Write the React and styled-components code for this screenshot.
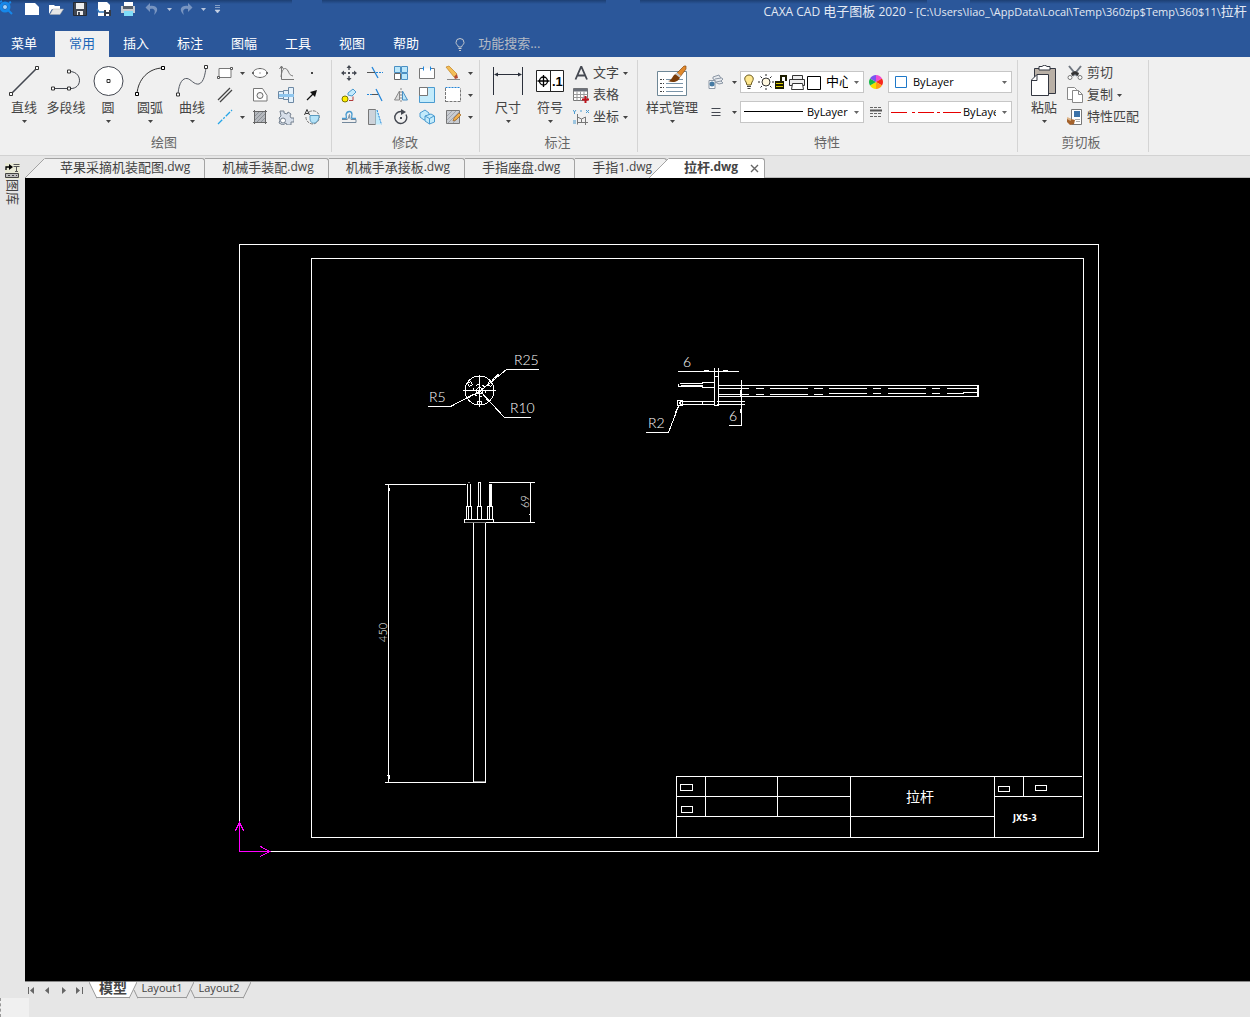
import React from "react";
import styled, { createGlobalStyle } from "styled-components";

const big = {
  line: (
    <>
      <path d="M3 29L29 3" stroke="#444851" strokeWidth="1.600" />
      <path d="M1.500 27.500h3v3h-3zM27.500 1.500h3v3h-3z" fill="#fff" stroke="#333" />
    </>
  ),
  polyline: (
    <>
      <path d="M3 23.500H19C33 25 33 6 19 6.500" fill="none" stroke="#444851" />
      <path
        d="M1.500 22h3v3h-3zM17.500 22h3v3h-3zM17.500 5h3v3h-3z"
        fill="#fff"
        stroke="#333"
      />
    </>
  ),
  circle: (
    <>
      <circle cx="16.500" cy="16" r="14.500" fill="#fff" stroke="#444851" />
      <path d="M15 14.500h3v3h-3z" fill="#fff" stroke="#333" />
    </>
  ),
  arc: (
    <>
      <path d="M3 29C4 14 15 3 29 3" fill="none" stroke="#333" />
      <path
        d="M1.500 27.500h3v3h-3zM27.500 1.500h3v3h-3z"
        fill="#fff"
        stroke="#000"
      />
    </>
  ),
  curve: (
    <>
      <path
        d="M2 29C3 17 7 13 11 13.500S18 20 23 19C28 17 29 9 30 3"
        fill="none"
        stroke="#555a63"
      />
      <path
        d="M.5 28h3v3h-3zM28.500 .5h3v3h-3z"
        fill="#fff"
        stroke="#333"
      />
    </>
  ),
  size: (
    <>
      <path d="M1.500 2v28M30.500 2v28M3 9.500h26" stroke="#2b303b" />
      <path d="M2 9.500l4-2v4zM30 9.500l-4-2v4z" fill="#2b303b" />
    </>
  ),
  symbol: (
    <>
      <path d="M2.500 5.500h27v21h-27zM16.500 5.500v21" fill="#fff" stroke="#222" />
      <circle cx="9.500" cy="16" r="4" fill="none" stroke="#000" strokeWidth="1.300" />
      <path d="M3.500 16h12M9.500 10v12" stroke="#000" strokeWidth="1.300" />
      <text
        x="18"
        y="21"
        fontFamily="Liberation Sans, sans-serif"
        fontWeight="700"
        fontSize="13"
      >
        .1
      </text>
    </>
  ),
  style: (
    <>
      <path d="M1.500 6.500h29v24h-29z" fill="#fff" stroke="#6e8796" />
      <path
        d="M4 14.500h4M4 18.500h4M4 22.500h4M4 26.500h4"
        stroke="#444"
        strokeDasharray="2 1"
      />
      <path
        d="M10 14.500h17M10 18.500h17M10 22.500h17M10 26.500h17"
        stroke="#7a94a8"
      />
      <path d="M20 9l8-8h2v3l-6 8z" fill="#e0882b" stroke="#8a4c12" strokeWidth=".7" />
      <path d="M12 16c4 0 4-6 8-7l4 3c-1 5-7 6-12 4z" fill="#7a3c08" />
      <path d="M19 9l2-1.500 4 3.500-1.500 1.500z" fill="#c6c6c6" />
    </>
  ),
  paste: (
    <>
      <path d="M6.500 3.500h21v25h-21z" fill="#b9b0a6" stroke="#333741" />
      <path d="M11 1.500h3c1-1.500 4-1.500 5 0h3v3.500H11z" fill="#fff" stroke="#333741" />
      <path d="M9 9.500h11.500v21h-17V15z" fill="#fff" stroke="#333741" />
      <path d="M3.500 15.500H9v-6" fill="none" stroke="#333741" />
    </>
  ),
};

const small = {
  rect: (
    <>
      <path d="M2 3.500h12v9H2z" fill="#fff" stroke="#777" />
      <path d="M.5 11.500h2v2h-2zM13.500 2.500h2v2h-2z" fill="#fff" stroke="#555" />
    </>
  ),
  ellipse: (
    <>
      <ellipse cx="8" cy="8" rx="7" ry="4.500" fill="#fff" stroke="#777" />
      <path d="M7.500 7.500h1v1h-1z" fill="#444" />
      <path d="M0 7h2v2H0zM14 7h2v2h-2zM7 3h2v1H7zM7 12h2v1H7z" fill="#666" />
    </>
  ),
  function: (
    <>
      <path d="M3.500 1v13.500H16M1.500 4l2-3 2 3" fill="none" stroke="#777" />
      <path d="M3 12C4 2 8 2 10 6s2 4 5 5" fill="none" stroke="#777" />
    </>
  ),
  point: <path d="M7 7h2v2H7z" fill="#444" />,
  parallel: <path d="M1 13L13 1M3 15L15 3" stroke="#444" strokeWidth="1.300" />,
  contour: (
    <>
      <path d="M1.500 1.500h9l4.500 7v5.500H1.500z" fill="#fff" stroke="#777" />
      <circle cx="8" cy="8.500" r="3" fill="#f5f5f5" stroke="#666" />
    </>
  ),
  shaft: (
    <>
      <path
        d="M.5 4.500h5v7h-5zM5.500 3.500h5v9h-5zM10.500 .5h5v15h-5z"
        fill="#e4f1fb"
        stroke="#6d88a3"
      />
      <path d="M1 7h15v3H1z" fill="#8fc6ee" />
    </>
  ),
  arrow: (
    <>
      <path d="M3 13l6-6" stroke="#111" strokeWidth="1.300" />
      <path d="M13 3l-2 7-5-5z" fill="#111" />
    </>
  ),
  center: (
    <path d="M1 15L15 1" stroke="#25a5e8" strokeWidth="1.300" strokeDasharray="6 1.500 2 1.500" />
  ),
  hatch: (
    <>
      <path d="M3 3h10v10H3z" fill="#b5b8bd" />
      <path d="M3 7l4-4M3 11l8-8M5 13l8-8M9 13l4-4" stroke="#80858c" strokeWidth=".8" />
      <path d="M1 2.500h14M1 13.500h14M2.500 1v14M13.500 1v14" stroke="#666" />
    </>
  ),
  gear: (
    <>
      <path
        d="M2 2h4v2l3 1 1-2 3 2-1 2 1 2h3v4h-3v3h-4l-1-2-3 2-4-2 1-3-1-2 2-2z"
        fill="#d7dfea"
        stroke="#74808f"
      />
      <circle cx="5" cy="11.500" r="2.500" fill="#fff" stroke="#74808f" />
    </>
  ),
  block: (
    <>
      <path d="M5 3C12-1 18 6 14 12S1 14 2 7" fill="none" stroke="#777" strokeDasharray="3 1" />
      <path d="M6 6.500h9c0 9-9 10-9 3z" fill="#b5e3f8" stroke="#5a9bc0" />
      <path d="M.5 6L3 .5 5.500 6M1.500 4.500h3" fill="none" stroke="#333" />
    </>
  ),
  move: (
    <>
      <path d="M8 1v4M8 11v4M1 8h4M11 8h4" stroke="#444851" strokeWidth="1.300" />
      <path
        d="M8 0l2.500 3h-5zM8 16l2.500-3h-5zM0 8l3-2.500v5zM16 8l-3-2.500v5z"
        fill="#444851"
      />
      <path d="M7 7h2v2H7z" fill="#444851" />
    </>
  ),
  trim: (
    <>
      <path d="M5 2l6 11" stroke="#2386da" strokeWidth="1.300" />
      <path d="M0 7.500h8" stroke="#555" />
      <path d="M9 7.500h7" stroke="#2386da" strokeDasharray="2 1" />
    </>
  ),
  array: (
    <>
      <path
        d="M1.500 1.500h6v6h-6zM8.500 1.500h6v6h-6zM8.500 8.500h6v6h-6z"
        fill="#bce7fa"
        stroke="#4a90c4"
      />
      <path d="M1.500 8.500h6v6h-6z" fill="#fff" stroke="#666" />
    </>
  ),
  breakline: (
    <>
      <path d="M5 3.500H.5v10h15v-10H11" fill="#fff" stroke="#777" />
      <path d="M3 3.500h2M4.500 1.500v4M11 3.500h2M11.500 1.500v4" stroke="#2386da" />
    </>
  ),
  erase: (
    <>
      <path d="M1 2l3-1 8 8-3 3z" fill="#f3bd57" stroke="#c28321" strokeWidth=".7" />
      <path d="M9 12l3-3 1 4-3 1z" fill="#b54b31" />
      <path d="M2 14.500h13" stroke="#888" />
    </>
  ),
  copymove: (
    <>
      <circle cx="4" cy="12" r="3" fill="#ffee00" stroke="#7b7600" />
      <path d="M7 6l5-4 3 3-4 4-4-1z" fill="#c4eafc" stroke="#4b9acf" />
      <path d="M12 9.500v4H8" fill="none" stroke="#b13a3a" />
    </>
  ),
  extend: (
    <>
      <path d="M9 2l6 12" stroke="#2386da" strokeWidth="1.300" />
      <path d="M0 7.500h5" stroke="#2386da" strokeDasharray="2 1" />
      <path d="M5 7.500h6" stroke="#555" />
    </>
  ),
  mirror: (
    <>
      <path d="M6.500 4v9h-5z" fill="#ddd" stroke="#888" />
      <path d="M9.500 4v9h5z" fill="#bce7fa" stroke="#4a90c4" />
      <path d="M8 1v14" stroke="#888" strokeDasharray="2 1" />
    </>
  ),
  scale: (
    <>
      <path d="M.5 .5h15v15H.5z" fill="#c3ebfb" stroke="#4a9bd0" />
      <path d="M.5 .5h8v8h-8z" fill="#fff" stroke="#777" />
    </>
  ),
  stretch: (
    <>
      <path d="M.5 1h15v14H.5z" fill="#fff" />
      <path d="M.5 1v14M.5 14.500h15V1" fill="none" stroke="#777" strokeDasharray="3 1" />
      <path d="M.5 .5h15" stroke="#2386da" strokeDasharray="2 1" />
    </>
  ),
  offset: (
    <>
      <path
        d="M1 9.500h4c1-1 0-3 0-4 1-4 6-4 6 0 0 1-1 3 0 4h4"
        fill="none"
        stroke="#4a9bd0"
        strokeWidth="1.300"
      />
      <path d="M1 13.500h14v-3H10c-2-1-1-4-1.500-5-1 1 0 4-2.500 5H1" fill="none" stroke="#73889c" />
    </>
  ),
  chamfer: (
    <>
      <path d="M1.500 .5h7v15h-7z" fill="#cdd3da" stroke="#777" />
      <path d="M8.500 1h2l4 14.500h-6z" fill="#c3ebfb" />
      <path d="M10 1l4.500 14.500" stroke="#2386da" strokeDasharray="2 1" />
    </>
  ),
  rotate: (
    <>
      <path d="M8 2.500a6 6 0 1 0 5 3" fill="none" stroke="#444851" strokeWidth="1.400" />
      <path d="M8 0l5 3-5 3z" fill="#444851" />
      <path d="M7 8h2v2H7z" fill="#444851" />
    </>
  ),
  copy3d: (
    <>
      <path d="M1 4l5-3 4 3v5l-5 2-4-3z" fill="#c3ebfb" stroke="#4a9bd0" />
      <path d="M6 7l6-2 3.500 2v6l-5 2-4.500-3z" fill="#c3ebfb" stroke="#4a9bd0" />
      <path d="M6 7l4.500 2.500L15 7M10.500 9.500V15" fill="none" stroke="#4a9bd0" />
    </>
  ),
  hatchedit: (
    <>
      <path d="M1.500 1.500h13v13h-13z" fill="#c9ccd1" stroke="#777" />
      <path d="M2 7l5-5M2 11l9-9M3 14l11-11M8 14l6-6" stroke="#979ca3" strokeWidth=".8" />
      <path d="M8 12l1-3 5-5 2 2-5 5z" fill="#efae4b" stroke="#8f5416" strokeWidth=".6" />
    </>
  ),
  text: (
    <path
      d="M2.500 14.500L8 2h.5L14 14.500M4.500 10.500h7.500"
      fill="none"
      stroke="#444851"
      strokeWidth="1.800"
    />
  ),
  table: (
    <>
      <path d="M.5 1.500h14v12H.5z" fill="#fff" stroke="#777" />
      <path d="M.5 1.500h14v3H.5z" fill="#6c7079" />
      <path d="M.5 7.500h14M.5 10.500h14M4 4.500v9M7.500 4.500v9M11 4.500v9" stroke="#999" />
      <path d="M9 12.500h7M12.500 9v7" stroke="#c0131c" strokeWidth="2" />
    </>
  ),
  coord: (
    <>
      <path
        d="M4.500 5v10.500M4.500 13.500H15M4.500 8l4 2 4-2M8.500 10v3M12.500 8v8"
        fill="none"
        stroke="#777"
      />
      <path
        d="M0 1l1.500 2L3 1M1.500 3v2M7 2h2M13 1l3 3M16 1l-3 3M0 12h3M0 14h3"
        fill="none"
        stroke="#4a9bd0"
      />
    </>
  ),
  layers: (
    <>
      <path
        d="M5 3l6-2 1 2 3 2-2 2 2 2-4 1-4-2V6l-2-1z"
        fill="#e7eaee"
        stroke="#8c97a5"
      />
      <path d="M7 5l6-1M8 8l5-1" stroke="#8c97a5" />
      <path d="M1 6.500h6v8H1z" fill="#fff" stroke="#8c97a5" />
      <circle cx="4" cy="10" r="2.500" fill="#467aa3" />
    </>
  ),
  lines: <path d="M3.500 4.500h9M3.500 8.500h9M3.500 11.500h9" stroke="#444851" />,
  dashes: (
    <>
      <path d="M2 3.500h12M2 9.500h12M2 12.500h12" stroke="#666" strokeDasharray="3 1" />
      <path d="M2 6.500h12" stroke="#555" strokeWidth="2" />
    </>
  ),
  wheel: (
    <>
      <path d="M8 8V1a7 7 0 0 1 6 3.500z" fill="#f24bd0" />
      <path d="M8 8l6-3.500a7 7 0 0 1 0 7z" fill="#f7271c" />
      <path d="M8 8l6 3.500A7 7 0 0 1 8 15z" fill="#ff9d13" />
      <path d="M8 8v7a7 7 0 0 1-6-3.500z" fill="#f5df00" />
      <path d="M8 8l-6 3.500a7 7 0 0 1 0-7z" fill="#15b849" />
      <path d="M8 8L2 4.500A7 7 0 0 1 8 1z" fill="#7a55f0" />
    </>
  ),
  cut: (
    <>
      <path d="M2 1l8 10M14 1L6 11" stroke="#707780" strokeWidth="2" />
      <path d="M4 8l4-2 4 2-1 3-3-2-3 2z" fill="#333" />
      <circle cx="3" cy="12.500" r="2" fill="#fff" stroke="#777" />
      <circle cx="13" cy="12.500" r="2" fill="#fff" stroke="#777" />
    </>
  ),
  copy: (
    <>
      <path d="M.5 .5h7l2 2v10h-9z" fill="#fff" stroke="#888" />
      <path d="M5.500 3.500h6l4 4v8h-10z" fill="#fff" stroke="#888" />
      <path d="M11.500 3.500v4h4" fill="none" stroke="#888" />
    </>
  ),
  match: (
    <>
      <path d="M4.500 .5h10v15h-10z" fill="#fff" stroke="#777" />
      <path d="M7 2h6v6H7z" fill="#3b72a9" />
      <path d="M8 10.500h5M9 12.500h4" stroke="#aaa" />
      <path d="M0 9l4 1 4 1-1 4-4 1-3-3z" fill="#a4622c" />
      <path d="M0 9l4 2" stroke="#ddb58a" strokeWidth="2" />
    </>
  ),
};

const quick = {
  file: <path d="M1 2h10l4 4v8H1z" fill="#fff" />,
  open: (
    <>
      <path d="M1 13V4h5l1 1h5v3H4z" fill="#fff" />
      <path d="M2 13.500L5 8h10.500L12 13.500z" fill="#e6e6e6" stroke="#aaa" strokeWidth=".5" />
    </>
  ),
  save: (
    <>
      <path d="M1.500 1.500h13v13h-13z" fill="#414753" stroke="#252a33" />
      <path d="M4 2h8v6H4z" fill="#eee" />
      <path d="M5 10h6v4H5z" fill="#eee" />
      <path d="M6 11h2v3H6z" fill="#414753" />
    </>
  ),
  saveas: (
    <>
      <path d="M2 1h9l3 3v11H2z" fill="#fff" />
      <path d="M1 8l2 3h5" fill="none" stroke="#3278bd" strokeWidth="1.500" />
      <path d="M8 9h7v6H8z" fill="#343b48" />
      <path d="M10 9h3v2h-3zM10 13h3v2h-3z" fill="#fff" />
    </>
  ),
  print: (
    <>
      <path d="M4 1h9v5H4z" fill="#fff" />
      <path d="M1 5h14v7H1z" fill="#c9cdd2" />
      <path d="M3 5h10v3H3z" fill="#555e69" />
      <path d="M4 10h9v5H4z" fill="#7fdcf8" />
    </>
  ),
  undo: (
    <path d="M6 2L1.500 6.500 6 11V8c4-1 6 1 4 6 6-5 3-10-4-9z" fill="#7894c0" />
  ),
  redo: (
    <path d="M10 2l4.500 4.500L10 11V8C6 7 4 9 6 14 0 9 3 4 10 5z" fill="#7894c0" />
  ),
};

const Icon = ({ d, size = 16 }) => (
  <svg width={size} height={size} viewBox={`0 0 ${size} ${size}`} aria-hidden="true">
    {d}
  </svg>
);

const Caret = () => (
  <svg width="5" height="3" viewBox="0 0 5 3" aria-hidden="true">
    <path d="M0 0h5L2.500 3z" fill="currentColor" />
  </svg>
);

const drawTools = [
  ["rect", "矩形", true],
  ["ellipse", "椭圆"],
  ["function", "公式曲线"],
  ["point", "点"],
  ["parallel", "平行线"],
  ["contour", "局部放大图"],
  ["shaft", "孔/轴"],
  ["arrow", "箭头"],
  ["center", "中心线", true],
  ["hatch", "剖面线"],
  ["gear", "齿轮"],
  ["block", "块"],
];

const editTools = [
  ["move", "平移"],
  ["trim", "裁剪"],
  ["array", "阵列"],
  ["breakline", "打断"],
  ["erase", "删除", true],
  ["copymove", "平移复制"],
  ["extend", "延伸"],
  ["mirror", "镜像"],
  ["scale", "缩放"],
  ["stretch", "拉伸", true],
  ["offset", "等距线"],
  ["chamfer", "过渡"],
  ["rotate", "旋转"],
  ["copy3d", "分解"],
  ["hatchedit", "编辑填充", true],
];

const BigTool = ({ icon, label, wide, plain }) => (
  <BigButton $wide={wide}>
    <Icon d={big[icon]} size={32} />
    <span>{label}</span>
    {!plain && <Caret />}
  </BigButton>
);

// every row keeps a narrow column for the caret, even where it is empty
const SmallTools = ({ items, cols, caretAfter }) => (
  <ToolGrid $cols={cols}>
    {items.map(([icon, label, caret], i) => (
      <React.Fragment key={icon}>
        <SmallButton aria-label={label}>
          <Icon d={small[icon]} />
        </SmallButton>
        {i % caretAfter.every === caretAfter.at &&
          (caret ? (
            <SmallButton aria-label={label + "选项"}>
              <Caret />
            </SmallButton>
          ) : (
            <i />
          ))}
      </React.Fragment>
    ))}
  </ToolGrid>
);

const ListTool = ({ icon, label, caret }) => (
  <ListButton>
    <Icon d={small[icon]} />
    <span>{label}</span>
    {caret && <Caret />}
  </ListButton>
);

const DocTab = ({ name, active, first }) => (
  <Doc $active={active}>
    {(active || first) && (
      <svg width="20" height="20" aria-hidden="true">
        <path d="M0 20L19 1h1v19z" fill={active ? "#fff" : "#f0f0f0"} />
        <path d="M0 20L19.500 .5" stroke="#a3a3a3" />
      </svg>
    )}
    <DocName $active={active} $slant={active || first}>
      {name}
      <Latin>.dwg</Latin>
      {active && (
        <svg width="9" height="9" aria-hidden="true">
          <path d="M1 1l7 7M8 1L1 8" stroke="#666" strokeWidth="1.400" />
        </svg>
      )}
    </DocName>
  </Doc>
);

const Sheet = ({ name, active }) => (
  <SheetTab $active={active}>
    <svg width="8" height="17" aria-hidden="true">
      {active && <path d="M0 0l8 17V0z" fill="#fff" />}
      <path d={active ? "M0 0l8 16.500" : "M4 8l4 8.500"} stroke="#999" />
    </svg>
    <SheetName $active={active}>{name}</SheetName>
    <svg width="8" height="17" aria-hidden="true">
      {active && <path d="M0 0h8L0 17z" fill="#fff" />}
      <path d="M8 0L0 16.500" stroke="#999" />
    </svg>
  </SheetTab>
);

const Drawing = () => (
  <Sketch role="img" aria-label="拉杆">
    <g
      transform="translate(-24.500 -177.500)"
      fill="none"
      stroke="#fff"
      strokeLinecap="square"
      shapeRendering="crispEdges"
    >
      {/* sheet frame */}
      <path d="M239 244H1098V851H239zM311 258H1083V837H311z" />

      {/* title block */}
      <path d="M676 837V776H1081M705 776V816M777 776V816M850 776V837M994 776V837M1023 776V796" />
      <path d="M676 796H850M994 796H1081M676 816H994" />
      <path d="M680 784h12v6h-12zM681 806h11v6h-11zM998 786h11v5h-11zM1035 785h11v5h-11z" />

      {/* end view */}
      <circle cx="479" cy="390" r="14.500" />
      <circle cx="479" cy="390" r="6" strokeDasharray="3 3" strokeLinecap="butt" />
      <circle cx="479" cy="390" r="3" />
      <path d="M463 390H495M479 375V406" />
      <path d="M467 383l3-2 2 3-3 2zM487 384l2-3 3 3-2 2zM477 401h4v3h-4z" />
      <path d="M479 391L506 369H538M428 406H450L479 391M479 390L504 417H530" />
      <path d="M492 379l5-5 1 0zM473 394l-7 3 1 1zM485 396l2 4 2 1z" fill="#fff" />

      {/* side view */}
      <path d="M678 371H738M704 370H708M723 370H727M714 368V376M718 368V376M714 376H718V405H714z" />
      <path d="M680 383H702M678 384V386M678 386H702M681 385H702M702 382H714M702 387H714" />
      <path d="M680 401H714M717 401H744M680 404H714M717 404H744M702 401V404" />
      <path d="M677 400h5v5h-5zM679 402h1v1h-1z" />
      <path d="M718 385H978V396H718M977 385V396" />
      <path d="M719 388H748M756 388H763M770 388H807M814 388H822M829 388H866M873 388H880M888 388H925M932 388H939M947 388H977" />
      <path d="M719 394H748M756 394H763M770 394H807M814 394H822M829 393H866M873 393H880M888 393H925M932 393H939M947 393H963M963 392H977" />
      <path d="M741 380V425H729M740 390V395M740 409V412" />
      <path d="M646 432H668L678 406M675 412l2-5-1 5z" />

      {/* front view */}
      <path d="M385 484H465M388 484V782M385 782H485M389 488V490M387 775H389V778" />
      <path d="M473 522V781M485 522V781M464 522V519H493V522H485" />
      <path d="M474 781H484M465 522H485M468 482h1" stroke="#888" />
      <path d="M467 484V506M470 484V506M466 519V506H471V519M468 506V519" />
      <path d="M478 506V482H480V506M477 519V506H481V519" />
      <path d="M489 506V484H491V506M490 484V506M487 519V506H492V519M489 506V519" />
      <path d="M489 482H534M493 522H534M530 482V522M529 514v0" />

      {/* coordinate origin */}
      <path d="M239 822V851H269M235 830L239 822L243 830M260 846L269 851L260 856" stroke="#f0f" />
    </g>
    <g transform="translate(-25 -178)">
      <DimText x="514" y="365">R25</DimText>
      <DimText x="429" y="402">R5</DimText>
      <DimText x="510" y="413">R10</DimText>
      <DimText x="683" y="367">6</DimText>
      <DimText x="729" y="421">6</DimText>
      <DimText x="648" y="428">R2</DimText>
      <DimText $small transform="translate(529 508) rotate(-90)">69</DimText>
      <DimText $small transform="translate(387 642) rotate(-90)">450</DimText>
      <PartName x="906" y="802">拉杆</PartName>
      <PartCode x="1013" y="821">JXS-3</PartCode>
    </g>
  </Sketch>
);

const App = () => {
  return (
    <Window>
      <GlobalStyle />
      <Header>
        <TitleRow>
          <svg width="14" height="16" aria-hidden="true">
            <circle cx="5" cy="7" r="4" fill="none" stroke="#1688ea" strokeWidth="3" />
            <circle cx="5" cy="7" r="2" fill="#9fd4ff" />
            <path d="M7 9l5 5M0 2l2-1M9 3l2-1" stroke="#1688ea" strokeWidth="2" />
          </svg>
          <QuickBar>
            <QuickButton aria-label="新建"><Icon d={quick.file} /></QuickButton>
            <QuickButton aria-label="打开"><Icon d={quick.open} /></QuickButton>
            <QuickButton aria-label="保存"><Icon d={quick.save} /></QuickButton>
            <QuickButton aria-label="另存为"><Icon d={quick.saveas} /></QuickButton>
            <QuickButton aria-label="打印"><Icon d={quick.print} /></QuickButton>
            <QuickButton aria-label="撤销"><Icon d={quick.undo} /></QuickButton>
            <QuickButton $width="10px" aria-label="撤销列表"><Caret /></QuickButton>
            <QuickButton aria-label="恢复"><Icon d={quick.redo} /></QuickButton>
            <QuickButton $width="10px" aria-label="恢复列表"><Caret /></QuickButton>
            <QuickButton $width="18px" aria-label="自定义">
              <svg width="7" height="8" aria-hidden="true">
                <path
                  d="M1 .5h5M1 2.500h5M1 5h5L3.500 8z"
                  fill="#c8d3e6"
                  stroke="#c8d3e6"
                  strokeWidth=".6"
                />
              </svg>
            </QuickButton>
          </QuickBar>
          <Title>
            <Latin>CAXA CAD </Latin>电子图板
            <Latin> 2020 - </Latin>
            <Latin $small>[C:\Users\liao_\AppData\Local\Temp\360zip$Temp\360$11\</Latin>
            拉杆
          </Title>
        </TitleRow>
        <Menu>
          <MenuButton $first>菜单</MenuButton>
          <MenuButton $active>常用</MenuButton>
          <MenuButton>插入</MenuButton>
          <MenuButton>标注</MenuButton>
          <MenuButton>图幅</MenuButton>
          <MenuButton>工具</MenuButton>
          <MenuButton>视图</MenuButton>
          <MenuButton>帮助</MenuButton>
          <Search>
            <svg width="10" height="13" aria-hidden="true">
              <path
                d="M3.500 9C3 7 1 6.500 1 4.500a4 4 0 0 1 8 0C9 6.500 7 7 6.500 9z"
                fill="none"
                stroke="#c5c9cf"
              />
              <path d="M3.500 10.500h3M4 12.500h2" stroke="#c5c9cf" />
            </svg>
            <input type="text" aria-label="功能搜索" placeholder="功能搜索..." />
          </Search>
        </Menu>
      </Header>

      <Ribbon>
        <Group $pad="0 6px 0 3px">
          <Tools>
            <BigTool icon="line" label="直线" />
            <BigTool icon="polyline" label="多段线" plain />
            <BigTool icon="circle" label="圆" />
            <BigTool icon="arc" label="圆弧" />
            <BigTool icon="curve" label="曲线" />
            <SmallTools
              items={drawTools}
              cols="24px 10px 26px 26px 26px"
              caretAfter={{ every: 4, at: 0 }}
            />
          </Tools>
          <GroupName>绘图</GroupName>
        </Group>
        <Group $pad="0 5px 0 4px">
          <Tools>
            <SmallTools
              items={editTools}
              cols="repeat(5, 26px) 8px"
              caretAfter={{ every: 5, at: 4 }}
            />
          </Tools>
          <GroupName>修改</GroupName>
        </Group>
        <Group $pad="0 9px 0 7px">
          <Tools>
            <BigTool icon="size" label="尺寸" />
            <BigTool icon="symbol" label="符号" />
            <ToolList>
              <ListTool icon="text" label="文字" caret />
              <ListTool icon="table" label="表格" />
              <ListTool icon="coord" label="坐标" caret />
            </ToolList>
          </Tools>
          <GroupName>标注</GroupName>
        </Group>
        <Group $pad="0 5px 0 4px">
          <Tools>
            <BigTool icon="style" label="样式管理" wide />
            <Props>
              <SmallButton aria-label="图层设置"><Icon d={small.layers} /></SmallButton>
              <SmallButton aria-label="图层选项"><Caret /></SmallButton>
              <Combo $size="13px">
                <svg width="82" height="18" aria-hidden="true">
                  <path d="M3 9C0 5 3 2 6 2s6 3 3 7l-1 3H4z" fill="#ffe88f" stroke="#6b5a1e" />
                  <path d="M4 13.500h4M4.500 15.500h3" stroke="#444" />
                  <circle cx="23" cy="9" r="4" fill="#fff8e0" stroke="#333" />
                  <path
                    d="M23 1v2M23 15v2M15 9h2M29 9h2M17.500 3.500L19 5M27 13l1.500 1.500M28.500 3.500L27 5M19 13l-1.500 1.500"
                    stroke="#222"
                  />
                  <path d="M32 8h9v8h-9z" fill="#1d1d00" />
                  <path d="M33 10.500h7M33 13.500h7" stroke="#dccb00" />
                  <path d="M38 8V3h5v5" fill="none" stroke="#1d1d00" strokeWidth="2" />
                  <path
                    d="M49.500 6V2.500h10V6M46.500 6.500h15v6h-15z"
                    fill="#eee"
                    stroke="#333"
                  />
                  <path d="M49.500 10.500h10l1 6h-12z" fill="#fff" stroke="#333" />
                  <path d="M64.500 3.500h13v13h-13z" fill="#fff" stroke="#000" />
                </svg>
                <select aria-label="图层"><option>中心线层</option></select>
                <Caret />
              </Combo>
              <SmallButton aria-label="颜色"><Icon d={small.wheel} /></SmallButton>
              <Combo>
                <svg width="21" height="14" aria-hidden="true">
                  <path d="M4.500 1.500h11v11h-11z" fill="#fff" stroke="#1e78c8" />
                </svg>
                <select aria-label="当前颜色"><option>ByLayer</option></select>
                <Caret />
              </Combo>

              <SmallButton aria-label="线宽设置"><Icon d={small.lines} /></SmallButton>
              <SmallButton aria-label="线宽选项"><Caret /></SmallButton>
              <Combo>
                <svg width="63" height="2" aria-hidden="true">
                  <path d="M1 0h59v1H1z" />
                </svg>
                <select aria-label="线宽"><option>ByLayer</option></select>
                <Caret />
              </Combo>
              <SmallButton aria-label="线型设置"><Icon d={small.dashes} /></SmallButton>
              <Combo>
                <svg width="71" height="1" aria-hidden="true">
                  <path d="M0 .5h16M21 .5h3M27 .5h16M46 .5h3M52 .5h18" stroke="#e60000" />
                </svg>
                <select aria-label="线型"><option>ByLayer</option></select>
                <Caret />
              </Combo>
            </Props>
          </Tools>
          <GroupName>特性</GroupName>
        </Group>
        <Group $pad="0 9px 0 5px">
          <Tools>
            <BigTool icon="paste" label="粘贴" />
            <ToolList>
              <ListTool icon="cut" label="剪切" />
              <ListTool icon="copy" label="复制" caret />
              <ListTool icon="match" label="特性匹配" />
            </ToolList>
          </Tools>
          <GroupName>剪切板</GroupName>
        </Group>
      </Ribbon>

      <Body>
        <Side>
          <SideButton>
            <svg width="15" height="16" aria-hidden="true">
              <path d="M0 0h15v16H0z" fill="#e9ead6" />
              <path d="M1 7V4h4" fill="none" stroke="#000" strokeWidth="1.300" />
              <path d="M4 1l4 3-4 3z" fill="#000" />
              <path d="M8.500 1.500h6M8.500 3.500h6M11.500 3v5M10 8.500h3" stroke="#555" />
              <path d="M.5 10.500h13v4H.5z" fill="#bbb" stroke="#444" />
              <path d="M3 12.500h2M7 12.500h2M11 12.500h1" stroke="#444" />
            </svg>
            <span>图库</span>
          </SideButton>
        </Side>
        <Work>
          <DocTabs>
            <DocTab name="苹果采摘机装配图" first />
            <DocTab name="机械手装配" />
            <DocTab name="机械手承接板" />
            <DocTab name="手指座盘" />
            <DocTab name="手指1" />
            <DocTab name="拉杆" active />
          </DocTabs>
          <Canvas>
            <Drawing />
          </Canvas>
          <Sheets>
            <PageButton aria-label="第一页">
              <svg width="7" height="7"><path d="M0 0h1v7H0zM6 0v7L2 3.500z" fill="#666" /></svg>
            </PageButton>
            <PageButton aria-label="上一页">
              <svg width="7" height="7"><path d="M5 0v7L1 3.500z" fill="#666" /></svg>
            </PageButton>
            <PageButton aria-label="下一页">
              <svg width="7" height="7"><path d="M2 0v7l4-3.500z" fill="#666" /></svg>
            </PageButton>
            <PageButton aria-label="最后一页">
              <svg width="7" height="7"><path d="M0 0v7l4-3.500zM6 0h1v7H6z" fill="#666" /></svg>
            </PageButton>
            <Sheet name="模型" active />
            <Sheet name="Layout1" />
            <Sheet name="Layout2" />
          </Sheets>
        </Work>
      </Body>
      <Status>
        <StatusGrip />
      </Status>
    </Window>
  );
};
export default App;

const GlobalStyle = createGlobalStyle`
  * {
    box-sizing: border-box;
  }
  body {
    margin: 0;
    font-family: "Open Sans", "Noto Sans CJK SC", sans-serif;
    font-size: 13px;
    color: #444;
  }
  button, select, input {
    font: inherit;
    color: inherit;
    background: none;
    border: none;
    padding: 0;
    margin: 0;
  }
  svg {
    display: block;
    flex-shrink: 0;
  }
`;

const Window = styled.div`
  min-height: 100vh;
  display: flex;
  flex-direction: column;
  overflow: hidden;
  background: #e6e6e6;
`;
const Latin = styled.span`
  font-size: ${({ $small }) => ($small ? "11px" : "12px")};
  white-space: pre;
`;

const Header = styled.header`
  background-color: #2b579a;
  background-image: linear-gradient(#1d3f73, #2b579a),
    linear-gradient(#1d3f73, #2b579a), linear-gradient(#1d3f73, #2b579a),
    linear-gradient(#1d3f73, #2b579a);
  background-repeat: no-repeat;
  background-size: 292px 4px, 284px 4px, 287px 4px, 280px 4px;
  background-position: 0 0, 322px 0, 640px 0, 970px 0;
`;
const TitleRow = styled.div`
  height: 22px;
  display: flex;
  overflow: hidden;
`;
const QuickBar = styled.div`
  display: flex;
  height: 18px;
  margin-left: 6px;
  color: #b9c6de;
`;
const QuickButton = styled.button`
  width: ${({ $width }) => $width || "24px"};
  display: flex;
  justify-content: center;
  align-items: center;
`;
const Title = styled.div`
  margin-left: 43%;
  line-height: 22px;
  white-space: nowrap;
  color: #e3e9f3;
`;
const Menu = styled.nav`
  display: flex;
  padding-top: 9px;
`;
const MenuButton = styled.button`
  height: 26px;
  padding: ${({ $first }) => ($first ? "0 11px 4px" : "0 14px 4px")};
  margin-right: ${({ $first }) => ($first ? "7px" : "0")};
  color: ${({ $active }) => ($active ? "#1a66b8" : "#fff")};
  background: ${({ $active }) => ($active ? "#f0f0f0" : "none")};
`;
const Search = styled.div`
  display: flex;
  align-items: center;
  gap: 13px;
  padding-left: 22px;
  input {
    width: 120px;
    padding-bottom: 3px;
    outline: none;
  }
  input::placeholder {
    color: #b4bac4;
    opacity: 1;
  }
`;

const Ribbon = styled.div`
  display: flex;
  padding: 3px 0;
  background: #f0f0f0;
  border-bottom: 1px solid #d2d2d2;
`;
const Group = styled.section`
  flex-shrink: 0;
  padding: ${({ $pad }) => $pad};
  border-right: 1px solid #d4d4d4;
`;
const Tools = styled.div`
  display: flex;
  height: 72px;
`;
const GroupName = styled.div`
  line-height: 20px;
  text-align: center;
  color: #666;
`;
const BigButton = styled.button`
  width: ${({ $wide }) => ($wide ? "60px" : "42px")};
  padding-top: 5px;
  display: flex;
  flex-direction: column;
  align-items: center;
  white-space: nowrap;
  line-height: 20px;
  span {
    margin-bottom: 3px;
  }
`;
const ToolGrid = styled.div`
  display: grid;
  grid-template-columns: ${({ $cols }) => $cols};
  grid-auto-rows: 22px;
  padding-top: 2px;
`;
const SmallButton = styled.button`
  display: flex;
  justify-content: center;
  align-items: center;
`;
const ToolList = styled.div`
  padding: 2px 0 0 2px;
`;
const ListButton = styled.button`
  height: 22px;
  display: flex;
  align-items: center;
  gap: 4px;
  span {
    padding-bottom: 4px;
  }
`;
const Props = styled.div`
  display: grid;
  grid-template-columns: 24px 12px 124px 24px 124px;
  grid-auto-rows: 22px;
  row-gap: 8px;
  padding: 11px 0 0 2px;
`;
const Combo = styled.div`
  display: flex;
  align-items: center;
  padding: 0 4px 0 2px;
  background: #fff;
  border: 1px solid #c6c6c6;
  color: #666;
  select {
    flex: 1;
    min-width: 0;
    height: 20px;
    padding-bottom: 2px;
    margin: 0 6px 0 1px;
    appearance: none;
    overflow: hidden;
    font-size: ${({ $size }) => $size || "11px"};
    color: #000;
  }
`;

const Body = styled.div`
  flex: 1;
  display: flex;
`;
const Side = styled.aside`
  width: 25px;
  flex-shrink: 0;
  padding: 7px 5px;
`;
const SideButton = styled.button`
  display: flex;
  flex-direction: column;
  align-items: center;
  span {
    writing-mode: vertical-rl;
    text-orientation: sideways;
    line-height: 15px;
  }
`;
const Work = styled.main`
  flex: 1;
  min-width: 0;
  display: flex;
  flex-direction: column;
`;
const DocTabs = styled.div`
  display: flex;
  padding-top: 2px;
  box-shadow: inset 0 -1px #bcbcbc;
`;
const Doc = styled.button`
  display: flex;
  height: 20px;
  margin-left: ${({ $active }) => ($active ? "-18px" : "0")};
`;
const DocName = styled.span`
  height: 20px;
  display: flex;
  align-items: center;
  line-height: 16px;
  padding: 0 ${({ $active }) => ($active ? "5px" : "14px")} 3px
    ${({ $slant }) => ($slant ? "15px" : "17px")};
  background: ${({ $active }) => ($active ? "#fff" : "#f0f0f0")};
  border: solid #a3a3a3;
  border-width: 1px 1px 0 0;
  border-radius: 0 3px 0 0;
  font-weight: ${({ $active }) => ($active ? "700" : "400")};
  svg {
    margin: 3px 0 0 12px;
  }
`;
const Canvas = styled.div`
  flex: 1;
  display: flex;
  background: #000;
`;
const Sketch = styled.svg`
  flex: 1;
  min-width: 0;
`;
const DimText = styled.text`
  font-family: Lato, sans-serif;
  font-weight: 300;
  font-size: ${({ $small }) => ($small ? "11px" : "14px")};
  fill: #fff;
`;
const PartName = styled.text`
  font-family: "Noto Sans CJK SC", sans-serif;
  font-size: 14px;
  fill: #fff;
`;
const PartCode = styled.text`
  font-family: "DejaVu Sans", sans-serif;
  font-weight: 700;
  font-size: 8px;
  fill: #fff;
`;
const Sheets = styled.div`
  display: flex;
  height: 17px;
  border-top: 1px solid #888;
`;
const PageButton = styled.button`
  width: 16px;
  display: flex;
  align-items: center;
  padding-left: 3px;
`;
const SheetTab = styled.button`
  display: flex;
  position: relative;
  z-index: ${({ $active }) => ($active ? "1" : "0")};
  margin-left: ${({ $active }) => ($active ? "0" : "-7px")};
`;
const SheetName = styled.span`
  height: 16px;
  min-width: ${({ $active }) => ($active ? "32px" : "48px")};
  padding-bottom: 3px;
  display: flex;
  align-items: center;
  justify-content: center;
  line-height: 12px;
  background: ${({ $active }) => ($active ? "#fff" : "none")};
  border-bottom: 1px solid #999;
  font-size: ${({ $active }) => ($active ? "14px" : "11px")};
  font-weight: ${({ $active }) => ($active ? "700" : "400")};
`;
const Status = styled.footer`
  height: 19px;
`;
const StatusGrip = styled.div`
  width: 29px;
  height: 19px;
  background: #f0f0f0;
  border-left: 1px dashed #999;
`;
